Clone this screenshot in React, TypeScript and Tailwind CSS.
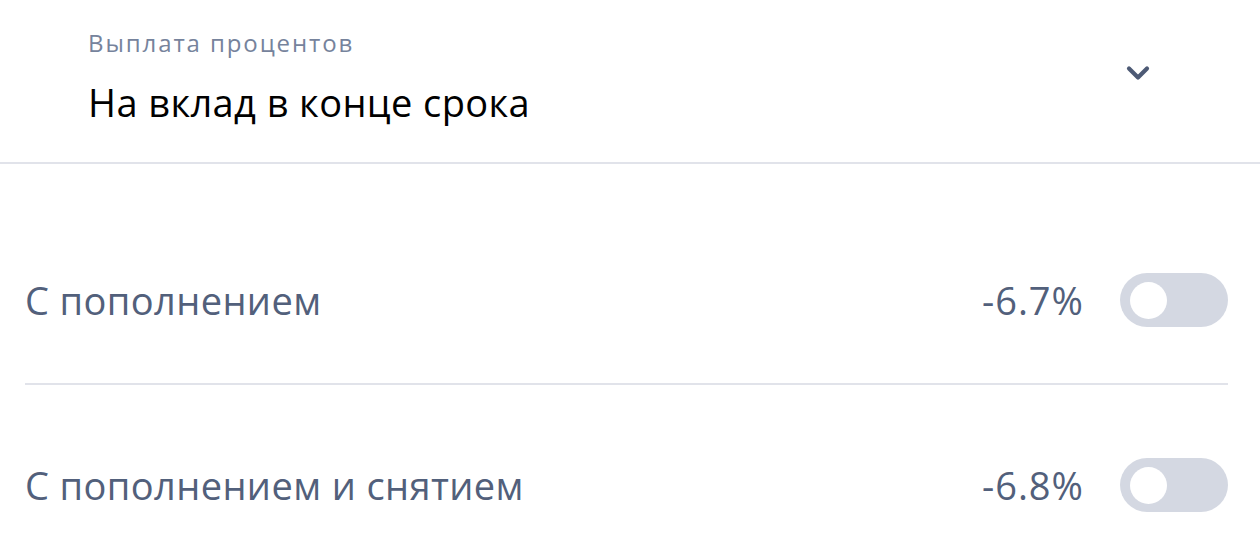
import { ChevronDown } from 'lucide-react';

const options = [
  { title: 'С пополнением', rate: '-6.7%' },
  { title: 'С пополнением и снятием', rate: '-6.8%' },
];

export default function App() {
  return (
    <div className="w-[1260px] h-[552px] overflow-hidden bg-white font-['Open_Sans',sans-serif]">
      {/* Select */}
      <div className="flex h-[164px] items-start justify-between border-b-2 border-[#e1e3ea] pl-[88px] pr-[104px]">
        <div className="pt-[27px]">
          <p className="text-[24px] leading-[32px] text-[#76839c] tracking-[1.9px]">Выплата процентов</p>
          <p className="mt-[21px] text-[38px] leading-[44px] text-black tracking-[0.4px]">На вклад в конце срока</p>
        </div>
        <ChevronDown className="mt-[55px] w-9 h-9 text-[#4d5a75]" strokeWidth={2.8} />
      </div>

      {/* Toggles */}
      <div className="pl-[25px] pr-[32px] pt-[53px]">
        {options.map((o, i) => (
          <div key={o.title}>
            {i > 0 && <div className="h-[2px] bg-[#e1e3ea]" />}
            <div className={`flex items-center ${i === 0 ? 'h-[166px]' : 'h-[200px]'}`}>
              <span className="flex-1 text-[38px] text-[#52607b] tracking-[0.4px]">{o.title}</span>
              <span className="text-[38px] text-[#52607b] tracking-[1px]">{o.rate}</span>
              <div className="ml-[36px] flex h-[54px] w-[108px] items-center rounded-full bg-[#d4d8e2] pl-[10px]">
                <div className="h-[37px] w-[37px] rounded-full bg-white" />
              </div>
            </div>
          </div>
        ))}
      </div>
    </div>
  );
}
